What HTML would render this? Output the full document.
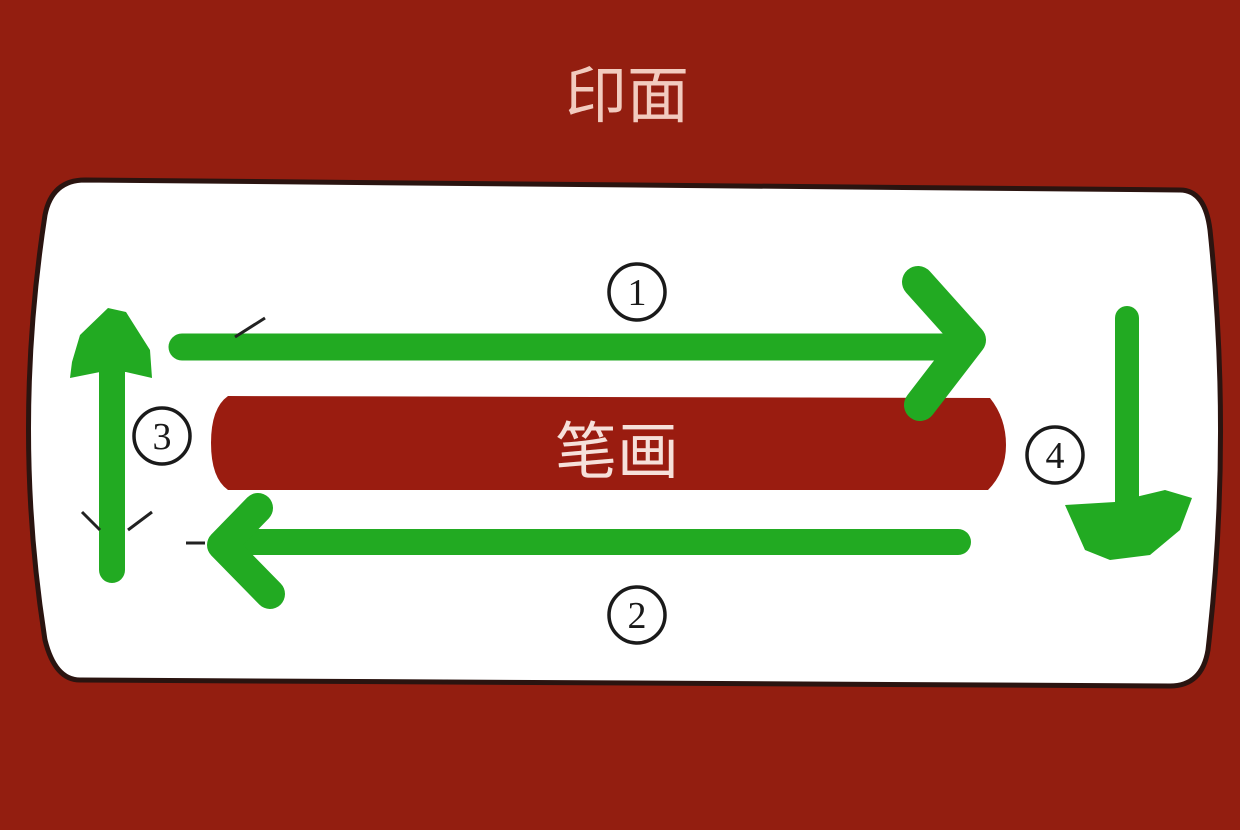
<!DOCTYPE html>
<html><head><meta charset="utf-8"><style>
html,body{margin:0;padding:0;background:#921d10;}
svg{display:block}
</style></head><body>
<svg width="1240" height="830" viewBox="0 0 1240 830" xmlns="http://www.w3.org/2000/svg">
<rect width="1240" height="830" fill="#931e10"/>
<text x="627" y="117" text-anchor="middle" font-family="Liberation Sans, Noto Sans CJK SC, sans-serif" font-size="62" fill="#f2cbbf">印面</text>
<path d="M85,180 L1180,190 Q1205,190 1210,230 Q1232,440 1208,650 Q1202,686 1170,686 L80,680 Q55,680 45,640 Q12,430 45,215 Q52,180 85,180 Z" fill="#ffffff" stroke="#2a1410" stroke-width="5"/>
<path d="M228,396 L990,398 Q1006,418 1006,445 Q1006,472 988,490 L228,490 Q211,478 211,443 Q211,408 228,396 Z" fill="#9a1c10"/>
<text x="617" y="473" text-anchor="middle" font-family="Liberation Sans, Noto Sans CJK SC, sans-serif" font-size="62" fill="#f6e0da">笔画</text>
<g fill="#ffffff" stroke="#1a1a1a" stroke-width="3.5">
<circle cx="637" cy="292" r="28"/>
<circle cx="637" cy="615" r="28"/>
<circle cx="162" cy="436" r="28"/>
<circle cx="1055" cy="455" r="28"/>
</g>
<g font-family="Liberation Serif, DejaVu Serif, serif" font-size="38" text-anchor="middle" fill="#1a1a1a">
<text x="637" y="305">1</text>
<text x="637" y="628">2</text>
<text x="162" y="449">3</text>
<text x="1055" y="468">4</text>
</g>
<g stroke="#22aa22" stroke-linecap="round" stroke-linejoin="round" fill="none">
<line x1="182" y1="347" x2="965" y2="347" stroke-width="27"/>
<path d="M918,282 L970,340 L920,405" stroke-width="32"/>
<line x1="250" y1="542" x2="958" y2="542" stroke-width="26"/>
<path d="M258,508 L222,545 L270,594" stroke-width="30"/>
<line x1="112" y1="340" x2="112" y2="570" stroke-width="26"/>
<line x1="1127" y1="318" x2="1127" y2="520" stroke-width="24"/>
</g>
<g fill="#22aa22">
<path d="M72,362 L80,335 L108,308 L126,312 L150,350 L152,378 L126,372 L100,372 L70,378 Z"/>
<path d="M1065,505 L1115,502 L1165,490 L1192,498 L1180,530 L1150,555 L1110,560 L1085,550 Z"/>
</g>
<g stroke="#222" stroke-width="3" fill="none">
<path d="M235,337 L265,318"/>
<path d="M82,512 L100,530 M128,530 L152,512"/>
<path d="M186,543 L205,543"/>
</g>
</svg>
</body></html>
